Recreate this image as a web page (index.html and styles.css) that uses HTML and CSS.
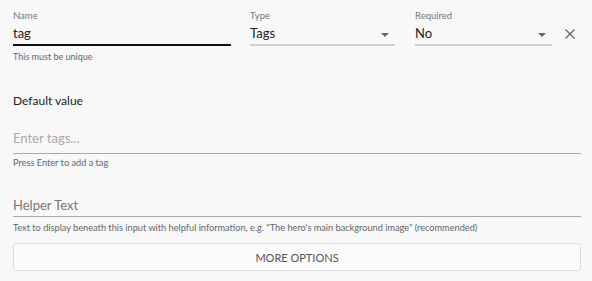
FILE: index.html
```html
<!DOCTYPE html>
<html lang="en">
<head>
    <meta charset="UTF-8">
    <title>Field editor</title>
    <link rel="stylesheet" href="styles.css">
</head>
<body>
    <div class="editor">
        <div class="row">
            <div class="field name-field">
                <label class="label">Name</label>
                <div class="value focused">tag</div>
                <div class="helper">This must be unique</div>
            </div>
            <div class="field type-field">
                <label class="label">Type</label>
                <div class="value select">Tags <span class="arrow"></span></div>
            </div>
            <div class="field req-field">
                <label class="label">Required</label>
                <div class="value select">No <span class="arrow"></span></div>
            </div>
            <button class="close" title="Remove">
                <svg width="10" height="10" viewBox="0 0 10 10"><path d="M0.5 0.5L9.5 9.5M9.5 0.5L0.5 9.5" stroke="#666" stroke-width="1.3" fill="none"/></svg>
            </button>
        </div>

        <h3 class="section">Default value</h3>
        <div class="wide tags-field">
            <div class="value placeholder">Enter tags...</div>
            <div class="helper">Press Enter to add a tag</div>
        </div>

        <div class="wide helper-field">
            <div class="value placeholder dark">Helper Text</div>
            <div class="helper">Text to display beneath this input with helpful information, e.g. "The hero's main background image" (recommended)</div>
        </div>

        <button class="more">MORE OPTIONS</button>
    </div>
</body>
</html>
```

FILE: styles.css
```css
body {
    margin: 0;
    background: #f8f8f8;
    font-family: Lato, 'Noto Sans', sans-serif;
    color: #222;
}
.editor {
    padding: 10px 11px 0 13px;
}
.row {
    display: flex;
    align-items: flex-start;
}
.field {
    display: flex;
    flex-direction: column;
}
.name-field {
    width: 218px;
}
.type-field {
    width: 145px;
    margin-left: 19px;
}
.req-field {
    width: 137px;
    margin-left: 20px;
}
.label {
    font-size: 9.5px;
    line-height: 12px;
    color: #777;
}
.value {
    font-size: 13px;
    line-height: 21px;
    height: 21px;
    margin-top: 1px;
    border-bottom: 2px solid #d0d0d0;
    display: flex;
    align-items: center;
}
.value.focused {
    border-bottom-color: #111;
}
.select {
    justify-content: space-between;
}
.arrow {
    width: 0;
    height: 0;
    border-left: 4px solid transparent;
    border-right: 4px solid transparent;
    border-top: 4px solid #666;
    margin-right: 6px;
    margin-top: 2px;
}
.helper {
    font-size: 9px;
    line-height: 11px;
    color: #666;
    margin-top: 5px;
}
.close {
    background: none;
    border: none;
    padding: 0;
    margin: 18px 0 0 12px;
    width: 12px;
    height: 12px;
    display: flex;
    align-items: center;
    justify-content: center;
    cursor: pointer;
}
.section {
    font-size: 12px;
    font-weight: normal;
    margin: 30px 0 0;
    line-height: 18px;
}
.wide .value {
    line-height: 18px;
    height: 18px;
    border-bottom: 1px solid #aaa;
}
.wide .helper {
    font-size: 9.2px;
}
.tags-field {
    margin-top: 19px;
}
.tags-field .value {
    padding-bottom: 6px;
}
.tags-field .helper {
    margin-top: 3px;
}
.placeholder {
    color: #aaa;
}
.placeholder.dark {
    color: #777;
}
.helper-field {
    margin-top: 28px;
}
.helper-field .value {
    padding-bottom: 2px;
}
.more {
    display: block;
    width: 100%;
    margin-top: 10px;
    height: 28px;
    background: #fbfbfb;
    border: 1px solid #dcdcdc;
    border-radius: 3px;
    font-family: Lato, 'Noto Sans', sans-serif;
    font-size: 11px;
    color: #555;
    cursor: pointer;
}
```
